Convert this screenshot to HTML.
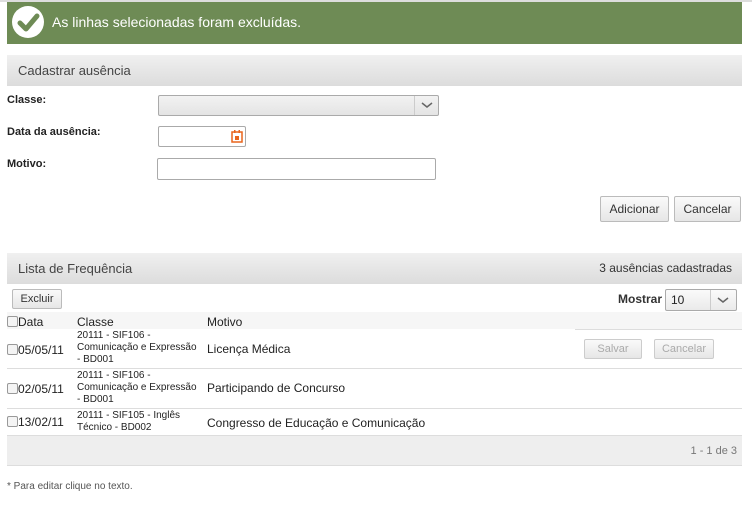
<!DOCTYPE html>
<html><head><meta charset="utf-8"><style>
*{box-sizing:border-box;margin:0;padding:0}
body{width:752px;height:506px;background:#fff;font-family:"Liberation Sans",sans-serif;color:#222;position:relative;overflow:hidden}
.a{position:absolute}
.top{left:0;top:0;width:752px;height:2px;background:#ddd}
.msg{left:7px;top:2px;width:735px;height:42px;background:#6e8b55;color:#fff;font-size:14px;line-height:40px;padding-left:45px}
.chk{left:12px;top:6px;width:32px;height:32px;border-radius:50%;background:#fff}
.hdr{left:7px;width:735px;height:31px;background:linear-gradient(#f0f0f0,#dcdcdc);font-size:13px;color:#444;line-height:31px;padding-left:11px}
.lbl{left:7px;font-size:11px;font-weight:bold}
.inp{border:1px solid #aaa;border-radius:2px;background:#fff}
.btn{border:1px solid #bbb;border-radius:2px;background:linear-gradient(#fafafa,#e6e6e6);font-size:12px;text-align:center;color:#333}
.row{left:7px;width:735px;border-bottom:1px solid #ddd}
.cb{width:11px;height:11px;border:1px solid #999;border-radius:2px;background:#f4f4f4;display:inline-block}
.sm{font-size:10px;line-height:12px}
</style></head><body>
<div class="a top"></div>
<div class="a msg">As linhas selecionadas foram excluídas.</div>
<div class="a chk"><svg width="32" height="32"><path d="M8 17 L14 23 L25 10" stroke="#6e8b55" stroke-width="5" fill="none" stroke-linecap="round" stroke-linejoin="round"/></svg></div>

<div class="a hdr" style="top:55px">Cadastrar ausência</div>
<div class="a lbl" style="top:94px">Classe:</div>
<div class="a lbl" style="top:126px">Data da ausência:</div>
<div class="a lbl" style="top:158px">Motivo:</div>
<div class="a inp" style="left:158px;top:95px;width:281px;height:21px;background:linear-gradient(#f2f2f2,#e4e4e4)"></div>
<div class="a" style="left:414px;top:96px;width:1px;height:19px;background:#ccc"></div>
<svg class="a" style="left:421px;top:101px" width="12" height="8"><path d="M1 2 L6 6 L11 2" stroke="#666" stroke-width="1.5" fill="none"/></svg>
<div class="a inp" style="left:158px;top:126px;width:88px;height:21px"></div>
<svg class="a" style="left:231px;top:129px" width="12" height="14"><rect x="1" y="3" width="10" height="10" fill="none" stroke="#e8641c" stroke-width="1.5"/><rect x="3" y="1" width="1.5" height="3" fill="#e8641c"/><rect x="7.5" y="1" width="1.5" height="3" fill="#e8641c"/><rect x="4" y="7" width="4" height="4" fill="#e8641c"/></svg>
<div class="a inp" style="left:157px;top:158px;width:279px;height:22px"></div>
<div class="a btn" style="left:600px;top:196px;width:69px;height:26px;line-height:24px">Adicionar</div>
<div class="a btn" style="left:674px;top:196px;width:67px;height:26px;line-height:24px">Cancelar</div>

<div class="a hdr" style="top:253px">Lista de Frequência<span style="position:absolute;right:10px;font-size:12px;color:#333">3 ausências cadastradas</span></div>
<div class="a btn" style="left:12px;top:289px;width:50px;height:20px;line-height:18px;font-size:11px">Excluir</div>
<div class="a" style="left:618px;top:292px;font-size:12px;font-weight:bold;color:#333">Mostrar</div>
<div class="a inp" style="left:665px;top:289px;width:72px;height:22px;background:linear-gradient(#fafafa,#eaeaea);font-size:12px;line-height:20px;padding-left:5px">10</div>
<div class="a" style="left:710px;top:290px;width:1px;height:20px;background:#ccc"></div>
<svg class="a" style="left:717px;top:296px" width="12" height="8"><path d="M1 2 L6 6 L11 2" stroke="#666" stroke-width="1.5" fill="none"/></svg>

<div class="a" style="left:7px;top:312px;width:735px;height:17px;background:#f6f6f6"></div>
<div class="a" style="left:7px;top:315px;font-size:12px"><span class="cb" style="vertical-align:-1px"></span>Data</div>
<div class="a" style="left:77px;top:315px;font-size:12px">Classe</div>
<div class="a" style="left:207px;top:315px;font-size:12px">Motivo</div>
<div class="a" style="left:575px;top:329px;width:167px;height:1px;background:#ddd"></div>

<div class="a row" style="top:330px;height:39px"></div>
<div class="a" style="left:7px;top:343px;font-size:12px"><span class="cb" style="vertical-align:-1px"></span>05/05/11</div>
<div class="a sm" style="left:77px;top:330px">20111 - SIF106 -<br>Comunicação e Expressão<br>- BD001</div>
<div class="a" style="left:207px;top:342px;font-size:12px">Licença Médica</div>
<div class="a btn" style="left:584px;top:339px;width:58px;height:20px;line-height:18px;font-size:11px;color:#aaa;border-color:#ccc">Salvar</div>
<div class="a btn" style="left:654px;top:339px;width:60px;height:20px;line-height:18px;font-size:11px;color:#aaa;border-color:#ccc">Cancelar</div>

<div class="a row" style="top:369px;height:40px"></div>
<div class="a" style="left:7px;top:382px;font-size:12px"><span class="cb" style="vertical-align:-1px"></span>02/05/11</div>
<div class="a sm" style="left:77px;top:370px">20111 - SIF106 -<br>Comunicação e Expressão<br>- BD001</div>
<div class="a" style="left:207px;top:381px;font-size:12px">Participando de Concurso</div>

<div class="a row" style="top:409px;height:27px"></div>
<div class="a" style="left:7px;top:415px;font-size:12px"><span class="cb" style="vertical-align:-1px"></span>13/02/11</div>
<div class="a sm" style="left:77px;top:410px">20111 - SIF105 - Inglês<br>Técnico - BD002</div>
<div class="a" style="left:207px;top:416px;font-size:12px">Congresso de Educação e Comunicação</div>

<div class="a" style="left:7px;top:436px;width:735px;height:30px;background:#eee;border-bottom:1px solid #ddd;font-size:11px;color:#777;text-align:right;line-height:30px;padding-right:5px">1 - 1 de 3</div>
<div class="a" style="left:7px;top:481px;font-size:10px;color:#555">* Para editar clique no texto.</div>
</body></html>
